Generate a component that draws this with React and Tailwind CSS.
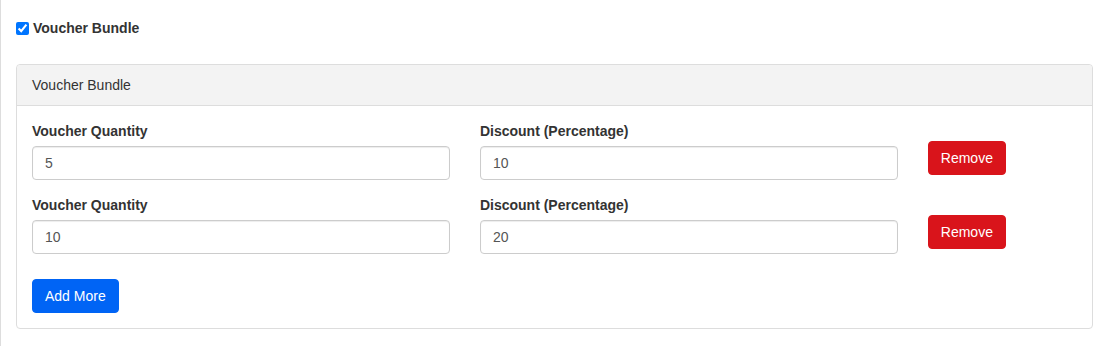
import { useState } from "react";

const App = () => {
  const [enabled, setEnabled] = useState(true);
  const [rows, setRows] = useState([
    { qty: "5", discount: "10" },
    { qty: "10", discount: "20" },
  ]);

  const update = (i, key, value) => {
    setRows(rows.map((r, idx) => (idx === i ? { ...r, [key]: value } : r)));
  };

  return (
    <div className="min-h-[346px] border-l border-[#dddddd] bg-white pl-[15px] pr-[11px] pt-[18px] font-['Liberation_Sans',Arial,sans-serif] text-[14px] leading-[20px] text-[#333333]">
      {/* Toggle */}
      <label className="flex items-center h-[20px] mb-[26px] font-bold">
        <input
          type="checkbox"
          checked={enabled}
          onChange={(e) => setEnabled(e.target.checked)}
          className="m-0 mr-[4px] w-[13px] h-[13px]"
        />
        Voucher Bundle
      </label>

      {/* Card */}
      <div className="border border-[#dddddd] rounded-[4px]">
        <div className="h-[41px] px-[15px] py-[10px] bg-[#f3f3f3] border-b border-[#dddddd] rounded-t-[4px]">
          Voucher Bundle
        </div>
        <div className="p-[15px]">
          {rows.map((row, i) => (
            <div key={i} className="flex -mx-[15px] mb-[15px]">
              <div className="w-5/12 px-[15px]">
                <div className="font-bold mb-[5px]">Voucher Quantity</div>
                <input
                  type="text"
                  value={row.qty}
                  onChange={(e) => update(i, "qty", e.target.value)}
                  className="block w-full h-[34px] px-[12px] border border-[#cccccc] rounded-[4px] text-[#555555] shadow-[inset_0_1px_1px_rgba(0,0,0,0.075)] outline-none"
                />
              </div>
              <div className="w-5/12 px-[15px]">
                <div className="font-bold mb-[5px]">Discount (Percentage)</div>
                <input
                  type="text"
                  value={row.discount}
                  onChange={(e) => update(i, "discount", e.target.value)}
                  className="block w-full h-[34px] px-[12px] border border-[#cccccc] rounded-[4px] text-[#555555] shadow-[inset_0_1px_1px_rgba(0,0,0,0.075)] outline-none"
                />
              </div>
              <div className="w-2/12 px-[15px] pt-[20px]">
                <button
                  type="button"
                  onClick={() => setRows(rows.filter((_, idx) => idx !== i))}
                  className="h-[34px] px-[12px] bg-[#d9141b] border border-[#d9141b] rounded-[4px] text-white"
                >
                  Remove
                </button>
              </div>
            </div>
          ))}
          <button
            type="button"
            onClick={() => setRows([...rows, { qty: "", discount: "" }])}
            className="mt-[10px] h-[34px] px-[12px] bg-[#0064f5] border border-[#0064f5] rounded-[4px] text-white"
          >
            Add More
          </button>
        </div>
      </div>
    </div>
  );
};

export default App;
